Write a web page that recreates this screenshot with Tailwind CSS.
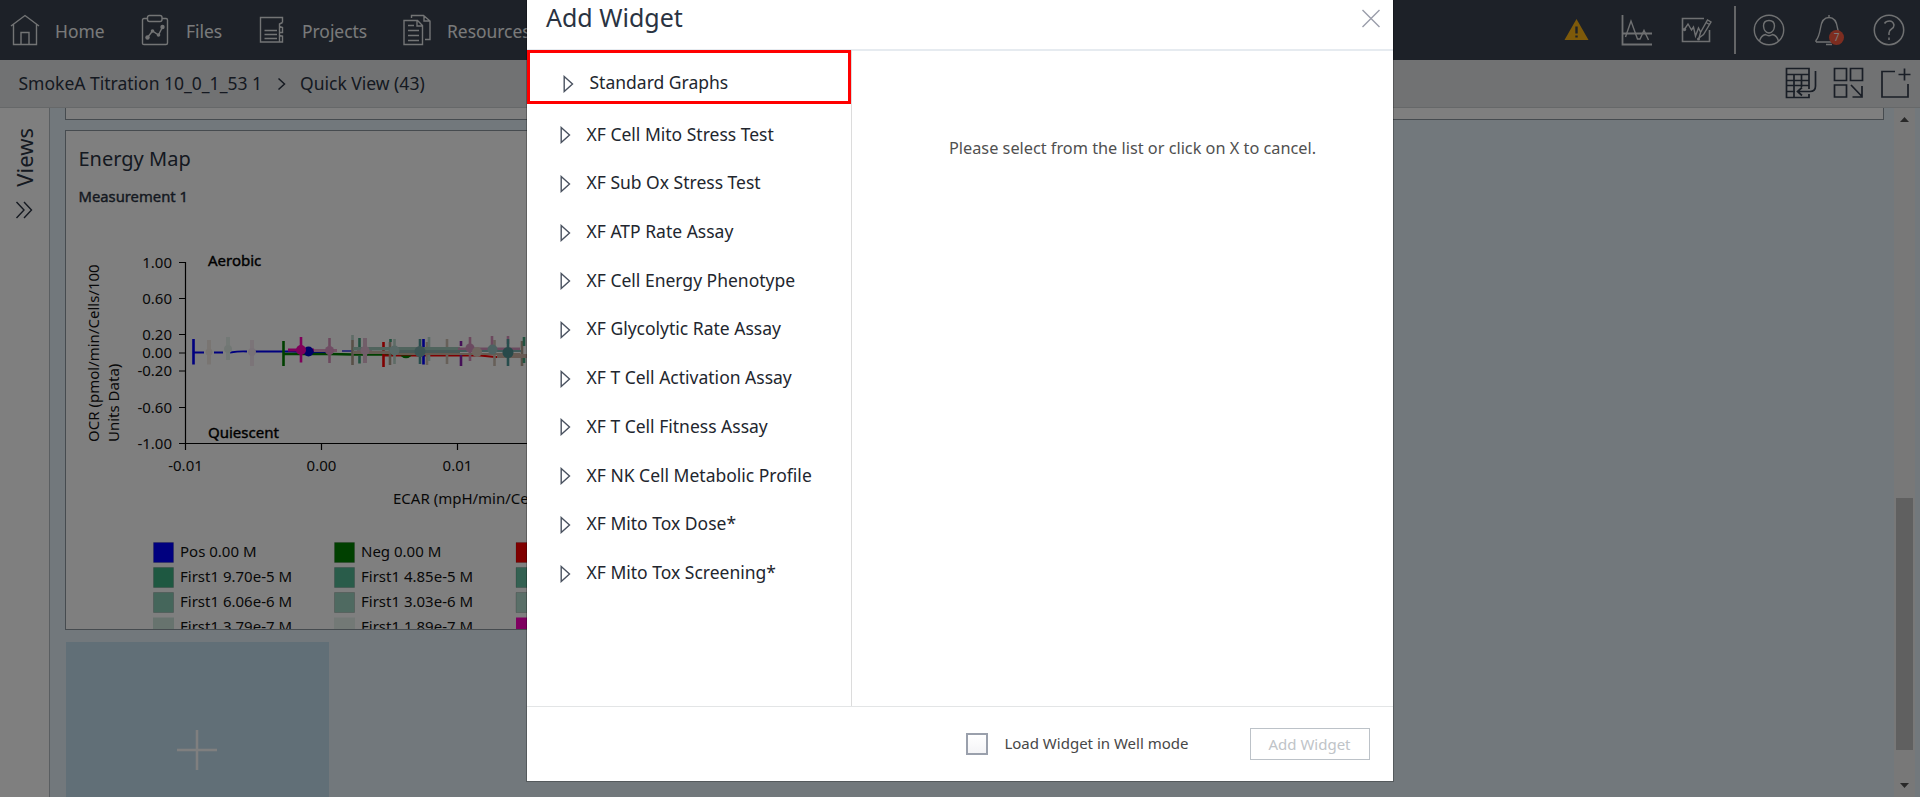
<!DOCTYPE html>
<html lang="en">
<head>
<meta charset="utf-8">
<title>Add Widget</title>
<script src="https://cdn.jsdelivr.net/npm/@tailwindcss/browser@4"></script>
</head>
<body class="relative h-[797px] w-[1920px] overflow-hidden bg-[#e4f0f8] font-['Noto_Sans',sans-serif] text-[17.5px] text-[#2a3342]">

<div class="flex h-full flex-col">
  <!-- Main navigation -->
  <header class="flex h-[60px] shrink-0 items-center justify-between bg-[#3a4350] text-[#f4f5f6]">
    <nav class="flex h-full items-center pt-[2px] pl-[10px] text-[17.4px]">
      <a class="flex w-[131px] items-center gap-[15px]">
        <svg class="-mt-[3px]" width="30" height="32" fill="none" stroke="#e6e8ea" stroke-width="1.4"><path d="M1 12 15 1.500 29 12M3.500 10.500V30.500H26.500V10.500M11 30.500V18.500H19V30.500"/></svg>
        Home</a>
      <a class="flex w-[118px] items-center gap-[17px]">
        <svg class="-mt-[3px]" width="28" height="32" fill="none" stroke="#e6e8ea" stroke-width="1.4"><path d="M6 4.500H3Q1.500 4.500 1.500 6V29.500Q1.500 30.500 3 30.500H25Q26.500 30.500 26.500 29V6Q26.500 4.500 25 4.500H21"/><rect x="6.500" y="1.500" width="14.500" height="6" rx="2"/><path d="M6.500 23.500 11.500 17 17.500 21 21.500 13"/><g fill="#e6e8ea" stroke="none"><circle cx="6.500" cy="23.500" r="2.200"/><circle cx="11.500" cy="17" r="1.800"/><circle cx="17.500" cy="21" r="1.800"/><circle cx="21.500" cy="13" r="2.200"/></g></svg>
        Files</a>
      <a class="flex w-[144px] items-center gap-[17px]">
        <svg class="-mt-[2px]" width="26" height="30" fill="none" stroke="#e6e8ea" stroke-width="1.400"><path d="M23.500 7.500V2.500H1.500V27H20.500M5.500 15.500H18M5.500 19.500H18M5.500 23.500H18M23.500 7.500 20.500 9V11.500L23.500 12.500V17.500H20.500V12M20.500 17.500V20.500L23.500 21V27H20.500V21"/></svg>
        Projects</a>
      <a class="flex items-center gap-[16px]">
        <svg class="-mt-[3px]" width="28" height="32" fill="none" stroke="#e6e8ea" stroke-width="1.400"><path d="M1 6.500H14.500L19.500 11.500V30.500H1ZM14 6.500V12H19.500M5 11.500H11M5 16.500H16M5 21.500H16M5 26.500H16M8.500 4V1.500H20.500L27 7V25.500H22M21 1.500V7H27"/></svg>
        Resources</a>
    </nav>
    <div class="flex h-full items-center pr-[15px]">
      <svg class="mr-[32px]" width="26" height="24" viewBox="0 0 26 24"><path d="M13.500 1 25.500 22H1.500Z" fill="#fdb515"/><path d="M13.500 8.500V15.500M13.500 17.500V19.500" stroke="#3a4350" stroke-width="2.400"/></svg>
      <svg class="mr-[29px]" width="31" height="32" fill="none" stroke="#dfe1e4" stroke-width="1.400"><path d="M1.500 1V30.500H31M1.500 19.500H31" stroke-width="1.800"/><path d="M4.500 23 10 7 16.500 25H19L23 16.500 27.500 26"/></svg>
      <svg class="mr-[22px]" width="31" height="30" fill="none" stroke="#dfe1e4" stroke-width="1.400"><path d="M23 3.500H1.500V26.500H28.500V15" stroke-width="1.600"/><path d="M3 15 7 9 10.500 15 12.500 12 14.500 21 17.500 13 19.500 17M18 23 19.500 17.500 26.500 5 30 7 22.500 19.500ZM25 7.500 28.500 9.500"/><g fill="#dfe1e4" stroke="none"><circle cx="3.500" cy="14.500" r="1.700"/><circle cx="17.500" cy="24" r="1.500"/></g></svg>
      <div class="mr-[17px] h-[48px] w-[2px] bg-[#c9cbce]"></div>
      <svg class="mr-[29px]" width="32" height="32" fill="none" stroke="#e0e2e5" stroke-width="1.400"><circle cx="16" cy="16" r="14.700"/><path d="M10.500 12Q10.500 6.500 16 6.500T21.500 12Q21 18.500 16 19Q11 18.500 10.500 12ZM6.500 27Q8 21.500 12.500 20.500Q16 23 19.500 20.500Q24 21.500 25.500 27"/></svg>
      <div class="relative mr-[29px]">
        <svg width="30" height="32" fill="none" stroke="#e0e2e5" stroke-width="1.400"><path d="M15 1V3.500M2 28V26.500Q5 23 6.500 14Q8 3.500 15 3.500T23.500 14Q24 18 26 22M2 28H18M12 30.500H18"/></svg>
        <span class="absolute top-[16px] left-[15px] flex size-[15px] items-center justify-center rounded-full bg-[#fb5a40] text-[10px]">7</span>
      </div>
      <svg width="32" height="32" fill="none" stroke="#e0e2e5" stroke-width="1.500"><circle cx="16" cy="16" r="14.700"/><path d="M11.500 9.500Q13 7 16.500 7T21 11Q21 13.500 18.500 15T16 19V21M16 23.500V26"/></svg>
    </div>
  </header>

  <!-- Breadcrumb and page tools -->
  <div class="flex h-[48px] shrink-0 items-center justify-between border-b border-[#cdd0d3] bg-[#e3e4e7] pr-[9px] pl-[18.5px]">
    <div class="flex items-center">
      <span>SmokeA Titration 10_0_1_53 1</span>
      <svg class="mr-[14px] ml-[15px]" width="9" height="14" fill="none" stroke="#2a3342" stroke-width="1.500"><path d="M1.500 1.500 7.500 7 1.500 12.500"/></svg>
      <span>Quick View (43)</span>
    </div>
    <div class="flex items-center gap-[16px] pb-[3px]">
      <svg class="mt-[2px]" width="32" height="32" fill="none" stroke="#333d4c" stroke-width="1.700"><path d="M24 22V1.500H1.500V30.500H24V27M1.500 7.500H24M1.500 13.500H24M1.500 18.500H24M1.500 24.500H10M9 7.500V30.500M16.500 7.500V20"/><path d="M30.500 4V19Q30.500 24.500 25 24.500H13M17 20.500 12.500 24.500 17 28.500"/></svg>
      <svg class="mt-[2px]" width="31" height="32" fill="none" stroke="#333d4c" stroke-width="1.700"><path d="M1.500 1.500H13.500V13.500H1.500ZM17.500 1.500H29.500V13.500H17.500ZM1.500 18H13.500V30H1.500ZM18 18 29 29.500M29 19V30H19.500"/></svg>
      <svg class="mt-[2px]" width="31" height="32" fill="none" stroke="#333d4c" stroke-width="1.700"><path d="M15 4.500H2V30H28V17M24.500 1.500V13.500M18.500 7.500H30.500"/></svg>
    </div>
  </div>

  <div class="flex min-h-0 grow">
    <!-- Collapsed side panel -->
    <aside class="flex w-[50px] shrink-0 flex-col items-center border-r border-[#b4bcc2] bg-white pt-[20px] pr-[2px]">
      <span class="rotate-180 text-[22px] leading-[30px] [writing-mode:vertical-rl]">Views</span>
      <svg class="mt-[14px]" width="18" height="18" fill="none" stroke="#2a3342" stroke-width="1.400"><path d="M1.500 1 9 9 1.500 17M9 1 16.500 9 9 17"/></svg>
    </aside>

    <main class="flex grow flex-col overflow-hidden pl-[15px]">
      <div class="h-[12px] w-[1819px] shrink-0 border border-t-0 border-[#8d979e] bg-white"></div>
      <section class="mt-[10px] h-[500px] w-[900px] shrink-0 overflow-hidden border border-[#8d979e] bg-white">
        <h2 class="mt-[14px] ml-[12.5px] text-[20px] leading-[27px]">Energy Map</h2>
        <h3 class="mt-[14px] ml-[12.5px] text-[14.800px] leading-[20px] [-webkit-text-stroke:0.400px_#2a3342]">Measurement 1</h3>
        <!-- Chart and legend; viewBox uses page units -->
        <svg width="898" height="423" viewBox="66 206 898 423" class="text-[15px]" fill="#111">
          <g stroke="#000" stroke-width="1.200" fill="none">
            <path d="M179 262.500H185.500V450M179 298.500H185.500M179 334.500H185.500M179 353H185.500M179 371H185.500M179 407.500H185.500M179 443.500H900M321.500 443.500V450M457.500 443.500V450"/>
          </g>
          <g text-anchor="end"><text x="172" y="267.500">1.00</text><text x="172" y="304">0.60</text><text x="172" y="340">0.20</text><text x="172" y="358">0.00</text><text x="172" y="376">-0.20</text><text x="172" y="413">-0.60</text><text x="172" y="449">-1.00</text></g>
          <g text-anchor="middle"><text x="185.500" y="471">-0.01</text><text x="321.500" y="471">0.00</text><text x="457.500" y="471">0.01</text></g>
          <text x="393" y="504">ECAR (mpH/min/Cells/100 Units Data)</text>
          <text transform="translate(99 442) rotate(-90)">OCR (pmol/min/Cells/100</text>
          <text transform="translate(119 442) rotate(-90)">Units Data)</text>
          <g stroke="#000" stroke-width="0.400" fill="#000"><text x="208" y="266">Aerobic</text><text x="208" y="438">Quiescent</text></g>

          <!-- Series lines -->
          <g fill="none">
            <path d="M193 352.500H204M214 352.500H223M230 352.500Q240 351 247 351.500M255 351.500H292L308 352H330" stroke="#00f" stroke-width="2"/>
            <path d="M342 351H354" stroke="#6b6bf0" stroke-width="2"/>
            <path d="M283 354H330L353 354.500H400" stroke="#008000" stroke-width="2.400"/>
            <path d="M383 355.500H480L495 357H500" stroke="#f00" stroke-width="1.800"/>
            <path d="M288 350H314" stroke="#ff00b4" stroke-width="3"/>
            <path d="M314 350.500H337M357 350.500H372" stroke="#e8a5cc" stroke-width="3"/>
          </g>
          <!-- Error bars -->
          <g stroke-width="2.600">
            <path d="M193.500 339V364.500M423.500 339V364.500" stroke="#00f"/>
            <path d="M352.500 340V365M390 342V365M522 341V366" stroke="#b0a08e"/>
            <path d="M427 342V365M447 339V364M494.500 340V366" stroke="#cfc1b3"/>
            <path d="M209 340V364.500" stroke="#f3ebe4" stroke-width="4"/>
            <path d="M228 337V360" stroke="#e7f3ed" stroke-width="4"/>
            <path d="M252 340V366" stroke="#f6e9f1" stroke-width="4"/>
            <path d="M352.500 335V340M394.500 339V364M429 337V361" stroke="#bcd8cd"/>
            <path d="M365 338V363" stroke="#e2bcd3" stroke-width="4"/>
            <path d="M329.500 338V363M470 337V361M492 336V345M508 336V344" stroke="#d993bd"/>
            <path d="M283.500 341V366" stroke="#008000"/>
            <path d="M301 337V362.500" stroke="#ff00b4"/>
            <path d="M359.500 338V347M359.500 356V363.500M390.500 339V342M524 337V346M524 354V363" stroke="#43a27e"/>
            <path d="M383.500 342V367" stroke="#f00"/>
            <path d="M461 341V346M461 355V366" stroke="#8a20b0"/>
            <path d="M420 339V364M508 339V366" stroke="#4f9a9a"/>
          </g>
          <circle cx="308.500" cy="351.500" r="5" fill="#0000d0"/>
          <path d="M400 355.500H412Q406 361 400 355.500Z" fill="#008000"/>
          <path d="M353 347H460V350.500H353Z" fill="#a0c8bb"/>
          <path d="M390 350H460V353H390Z" fill="#8fb3ae"/>
          <path d="M353 351H390V354H353Z" fill="#ccb9a8"/>
          <path d="M395 353H520V355H395Z" fill="#cbb6a5"/>
          <path d="M458 347.500H520V350H458Z" fill="#d795c0"/>
          <path d="M460 350H521V352H460Z" fill="#80b5b4"/>
          <path d="M497 354H527V358H497Z" fill="#d0b5a6"/>
          <g>
            <circle cx="301" cy="350" r="5" fill="#ff00b4"/>
            <circle cx="329.500" cy="350.500" r="4.500" fill="#e09bc8"/><circle cx="365" cy="350.500" r="4.500" fill="#e2bcd3"/>
            <circle cx="209" cy="352" r="3.500" fill="#f1e9e2"/><circle cx="228" cy="349" r="4" fill="#e3efe9"/><circle cx="252" cy="352" r="4" fill="#f3e4ee"/>
            <circle cx="394.500" cy="350.500" r="5" fill="#b0d0cc"/><circle cx="420" cy="351.500" r="5.500" fill="#78a8a8"/>
            <circle cx="470" cy="348" r="4.500" fill="#d795c0"/><circle cx="477" cy="352" r="5" fill="#dccdbf"/><circle cx="492.500" cy="349.500" r="5" fill="#9bc4c4"/><circle cx="508" cy="352.500" r="5.500" fill="#509294"/>
          </g>

          <!-- Legend -->
          <g stroke="#000" stroke-opacity="0.150">
            <path d="M153.500 542.500h20v20h-20z" fill="#00f"/><path d="M334.500 542.500h20v20h-20z" fill="#008000"/><path d="M516 542.500h20v20h-20z" fill="#f00"/>
            <path d="M153.500 567.500h20v20h-20z" fill="#3cb083"/><path d="M334.500 567.500h20v20h-20z" fill="#53b995"/><path d="M516 567.500h20v20h-20z" fill="#69c2a4"/>
            <path d="M153.500 592.500h20v20h-20z" fill="#8accb6"/><path d="M334.500 592.500h20v20h-20z" fill="#9fd5c3"/><path d="M516 592.500h20v20h-20z" fill="#b4ded0"/>
          </g>
          <path d="M153 617.500h21v21h-21z" fill="#cfe6dd"/><path d="M334 617.500h21v21h-21z" fill="#e6f2ed"/><path d="M516 617.500h21v21h-21z" fill="#ff00c0"/>
          <text x="180" y="557">Pos 0.00 M</text><text x="361" y="557">Neg 0.00 M</text>
          <text x="180" y="582">First1 9.70e-5 M</text><text x="361" y="582">First1 4.85e-5 M</text>
          <text x="180" y="607">First1 6.06e-6 M</text><text x="361" y="607">First1 3.03e-6 M</text>
          <text x="180" y="632">First1 3.79e-7 M</text><text x="361" y="632">First1 1.89e-7 M</text>
        </svg>
      </section>
      <div class="mt-[12px] ml-px flex h-[216px] w-[263px] shrink-0 items-center justify-center bg-[#c3deee]">
        <svg class="-ml-px" width="42" height="42" stroke="#fff" stroke-width="2.500"><path d="M21 1V41M1 21H41"/></svg>
      </div>
    </main>

    <!-- Scrollbar -->
    <div class="mr-[5px] flex w-[21px] shrink-0 flex-col items-center bg-[#f1f1f1] pt-[9px] pb-[9px]">
      <svg width="9" height="5"><path d="M0 5 4.500 0 9 5Z" fill="#505050"/></svg>
      <div class="mt-[376px] h-[252px] w-[17px] bg-[#c1c1c1]"></div>
      <svg class="mt-auto" width="9" height="5"><path d="M0 0 4.500 5 9 0Z" fill="#505050"/></svg>
    </div>
  </div>
</div>

<!-- Modal -->
<div class="absolute inset-0 flex bg-black/50 pl-[527px]">
  <div class="flex h-[781px] w-[866px] flex-col bg-white shadow-[0_0_0_1px_rgba(0,0,0,0.25)]">
    <div class="flex h-[51px] shrink-0 items-start justify-between border-b-2 border-[#e6ebf0] pr-[13px] pl-[19px]">
      <h1 class="text-[25px] leading-[35px]">Add Widget</h1>
      <svg class="mt-[8.5px]" width="19" height="19" fill="none" stroke="#9a9daa" stroke-width="1.400"><path d="M1.500 1 18.500 18M18.500 1 1.500 18"/></svg>
    </div>
    <div class="flex h-[655px] shrink-0 text-[#22262e]">
      <ul class="-mt-px w-[325px] shrink-0 border-r border-[#dcdcdc]">
        <li class="relative mb-[5.500px] flex h-[54px] w-[324px] items-center gap-[16px] border-3 border-[#f00] pt-[10px] pl-[32.500px]"><svg class="mt-[3px]" width="11" height="18" fill="none" stroke="#4a5260" stroke-width="1.400"><path d="M1.200 1.500 9.500 9 1.200 16.500Z"/></svg>Standard Graphs</li>
        <li class="flex h-[48.700px] items-center gap-[16px] pl-[32.500px]"><svg class="mt-[3px]" width="11" height="18" fill="none" stroke="#4a5260" stroke-width="1.400"><path d="M1.200 1.500 9.500 9 1.200 16.500Z"/></svg>XF Cell Mito Stress Test</li>
        <li class="flex h-[48.700px] items-center gap-[16px] pl-[32.500px]"><svg class="mt-[3px]" width="11" height="18" fill="none" stroke="#4a5260" stroke-width="1.400"><path d="M1.200 1.500 9.500 9 1.200 16.500Z"/></svg>XF Sub Ox Stress Test</li>
        <li class="flex h-[48.700px] items-center gap-[16px] pl-[32.500px]"><svg class="mt-[3px]" width="11" height="18" fill="none" stroke="#4a5260" stroke-width="1.400"><path d="M1.200 1.500 9.500 9 1.200 16.500Z"/></svg>XF ATP Rate Assay</li>
        <li class="flex h-[48.700px] items-center gap-[16px] pl-[32.500px]"><svg class="mt-[3px]" width="11" height="18" fill="none" stroke="#4a5260" stroke-width="1.400"><path d="M1.200 1.500 9.500 9 1.200 16.500Z"/></svg>XF Cell Energy Phenotype</li>
        <li class="flex h-[48.700px] items-center gap-[16px] pl-[32.500px]"><svg class="mt-[3px]" width="11" height="18" fill="none" stroke="#4a5260" stroke-width="1.400"><path d="M1.200 1.500 9.500 9 1.200 16.500Z"/></svg>XF Glycolytic Rate Assay</li>
        <li class="flex h-[48.700px] items-center gap-[16px] pl-[32.500px]"><svg class="mt-[3px]" width="11" height="18" fill="none" stroke="#4a5260" stroke-width="1.400"><path d="M1.200 1.500 9.500 9 1.200 16.500Z"/></svg>XF T Cell Activation Assay</li>
        <li class="flex h-[48.700px] items-center gap-[16px] pl-[32.500px]"><svg class="mt-[3px]" width="11" height="18" fill="none" stroke="#4a5260" stroke-width="1.400"><path d="M1.200 1.500 9.500 9 1.200 16.500Z"/></svg>XF T Cell Fitness Assay</li>
        <li class="flex h-[48.700px] items-center gap-[16px] pl-[32.500px]"><svg class="mt-[3px]" width="11" height="18" fill="none" stroke="#4a5260" stroke-width="1.400"><path d="M1.200 1.500 9.500 9 1.200 16.500Z"/></svg>XF NK Cell Metabolic Profile</li>
        <li class="flex h-[48.700px] items-center gap-[16px] pl-[32.500px]"><svg class="mt-[3px]" width="11" height="18" fill="none" stroke="#4a5260" stroke-width="1.400"><path d="M1.200 1.500 9.500 9 1.200 16.500Z"/></svg>XF Mito Tox Dose*</li>
        <li class="flex h-[48.700px] items-center gap-[16px] pl-[32.500px]"><svg class="mt-[3px]" width="11" height="18" fill="none" stroke="#4a5260" stroke-width="1.400"><path d="M1.200 1.500 9.500 9 1.200 16.500Z"/></svg>XF Mito Tox Screening*</li>
      </ul>
      <p class="pt-[85px] pl-[97px] text-[16.300px] leading-[24px] text-[#505050]">Please select from the list or click on X to cancel.</p>
    </div>
    <div class="flex grow items-center justify-end border-t border-[#e3e5e6] pr-[23px] text-[15px]">
      <div class="size-[22px] border-2 border-[#9aa0ac] bg-gradient-to-b from-white to-[#f4f4f6]"></div>
      <span class="mr-[61.500px] ml-[16px] -mt-px text-[#474747]">Load Widget in Well mode</span>
      <button class="h-[32px] w-[120px] border border-[#bcc2c8] pr-px text-[#c0c4c8]">Add Widget</button>
    </div>
  </div>
</div>
</body>
</html>
